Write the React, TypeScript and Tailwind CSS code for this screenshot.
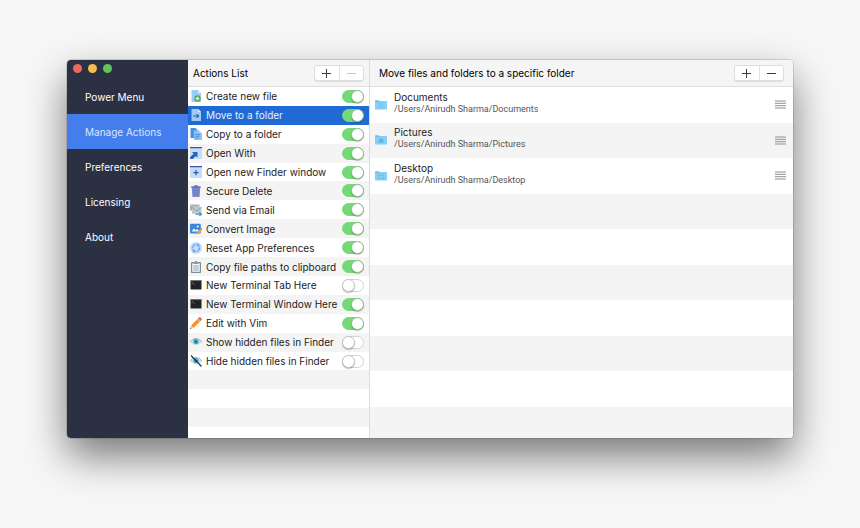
import React, { useState } from "react";
import clsx from "clsx";

function FileShape({ x = 1.5 }: { x?: number }) {
  return (
    <>
      <path d={`M${x} 0h6.5l3 3v9h-9.5z`} fill="#9ccbf8" />
      <path d={`M${x + 6.5} 0v3h3z`} fill="#dceefe" />
    </>
  );
}

function CreateIcon() {
  return (
    <>
      <FileShape />
      <circle cx="7.5" cy="8.5" r="3.2" fill="#4fa858" />
      <path d="M7.5 6.7v3.6M5.7 8.5h3.6" stroke="#e2f6de" strokeWidth="1.3" />
    </>
  );
}

function MoveIcon() {
  return (
    <>
      <FileShape />
      <path d="M3 7h5.5M6.6 5.2 8.6 7 6.6 8.8" stroke="#2763b5" strokeWidth="1.1" fill="none" />
    </>
  );
}

function CopyIcon() {
  return (
    <>
      <path d="M.5 0h5l2 2v8h-7z" fill="#4593e3" />
      <path d="M4 2.5h5.5L12 5v7H4z" fill="#8cc2f5" />
      <path d="M9.5 2.5V5H12z" fill="#dceefe" />
      <path d="M5.3 6.5h4.5M5.3 8.2h4.5M5.3 9.9h3" stroke="#3d86d6" strokeWidth=".8" />
    </>
  );
}

function OpenWithIcon() {
  return (
    <>
      <path d="M0 0h12v12H0z" fill="#c3def7" />
      <path d="M0 0h12v1.3H0z" fill="#3c4fae" />
      <path d="M2 5h5.5v5.5L5.8 8.9 2.700 12H.2V9.900L3.700 6.700z" fill="#2a62b8" />
    </>
  );
}

function NewWindowIcon() {
  return (
    <>
      <path d="M0 0h12v12H0z" fill="#c3def7" />
      <path d="M0 0h12v1.3H0z" fill="#3c4fae" />
      <path d="M6 4v5.2M3.4 6.6h5.2" stroke="#3c4fae" strokeWidth="1.2" />
    </>
  );
}

function TrashIcon() {
  return (
    <>
      <path d="M1.800 3h8.400l-.6 9H2.400z" fill="#7f89cb" />
      <path d="M1.3 1.2H4.2V.2h3.6v1h2.9V3H1.3z" fill="#6673c2" />
      <path d="M4.3 4.2v6.6M6 4.2v6.6M7.7 4.2v6.6" stroke="#6974bd" strokeWidth=".5" />
    </>
  );
}

function MailIcon() {
  return (
    <>
      <path d="M0 .5h9.5v6H0z" fill="#9dadb7" />
      <path d="M0 .5l4.7 3.4L9.5.5" stroke="#dbe2e6" strokeWidth=".8" fill="none" />
      <path d="M2 3.3h9.5v6.5H2z" fill="#bfcad1" />
      <path d="M2 3.3l4.700 3.700 4.800-3.700" stroke="#7d8d97" strokeWidth=".8" fill="none" />
      <path d="M5.500 10.200h5.700M9.300 8.400l2.200 1.800-2.200 1.700" stroke="#3b90e6" strokeWidth="1.200" fill="none" />
    </>
  );
}

function ImageIcon() {
  return (
    <>
      <rect y=".8" width="10.8" height="9.6" rx="1" fill="#3a86dd" />
      <path d="M1.5 8.600 4 5.300l1.700 2 1.300-1.500 2.300 2.800z" fill="#e6f2ff" />
      <circle cx="7.7" cy="3.6" r="1" fill="#fff" />
      <path d="M6.500 11.500l.7-2.300 3.700-4 1.300 1.300-3.600 4.300z" fill="#f2a33a" />
      <path d="M10.300 5.700l.8-.8 1 .9-.8.900z" fill="#d9534a" />
    </>
  );
}

function ResetIcon() {
  return (
    <>
      <circle cx="6" cy="6" r="6" fill="#bfdcfb" />
      <circle cx="6" cy="6" r="3.5" stroke="#5a86d8" strokeWidth="1" strokeDasharray="4.3 1.2" fill="none" />
      <path d="M7.800 1.500l1.800 1.700-2.100.4zM4.200 10.500l-1.800-1.700 2.100-.4z" fill="#5a86d8" />
    </>
  );
}

function ClipboardIcon() {
  return (
    <>
      <rect x="1" y="1" width="10" height="11" rx=".8" fill="#7d8e98" />
      <path d="M2.200 2.400h7.600v8.400H2.200z" fill="#f6f8f9" />
      <path d="M3.700 1h1.100a1.200 1.200 0 0 1 2.400 0h1.100v2H3.700z" fill="#8b9ba5" />
      <path d="M3.300 5h5.400M3.300 7h5.400M3.300 9h5.400" stroke="#8797a0" strokeWidth=".9" />
    </>
  );
}

function TerminalIcon() {
  return (
    <>
      <path d="M.5 1.500h11v9H.5z" fill="#222" />
      <path d="M.5 1.500h11v.7H.5z" fill="#555" />
      <path d="M1.700 3.200l1.300 1-1.300.9M3.600 5.300h1.400" stroke="#858585" strokeWidth=".6" fill="none" />
    </>
  );
}

function PencilIcon() {
  return (
    <>
      <path d="M1 8.500l6.800-6.800 2.500 2.500L3.500 11z" fill="#f59331" />
      <path d="M7.800 1.700l1.300-1.300c.6-.5 1.100-.4 1.500 0l1 1c.4.400.5 1 0 1.500l-1.300 1.300z" fill="#ef6a55" />
      <path d="M7.200 2.300l.8-.8 2.500 2.500-.8.800z" fill="#b8c4ca" />
      <path d="M1 8.500l2.500 2.500L0 12z" fill="#f3c99a" />
      <path d="M.5 10.500l1 1L0 12z" fill="#3d4a55" />
    </>
  );
}

function EyeIcon() {
  return (
    <>
      <path d="M0 6c2.800-4.600 9.200-4.600 12 0-2.800 4.200-9.200 4.200-12 0z" fill="#d5e0e5" />
      <path d="M0 6c2.800-4.600 9.200-4.600 12 0" stroke="#93a9b3" strokeWidth=".8" fill="none" />
      <circle cx="6" cy="5.6" r="2.7" fill="#35a9c6" />
      <circle cx="6" cy="5.6" r="1" fill="#1b4350" />
      <circle cx="7" cy="4.700" r=".5" fill="#d8f3fa" />
    </>
  );
}

function EyeOffIcon() {
  return (
    <>
      <EyeIcon />
      <path d="M1 .5l10.500 11" stroke="#1d3038" strokeWidth="1.1" />
    </>
  );
}

const initialActions = [
  { name: "Create new file", icon: CreateIcon, on: true },
  { name: "Move to a folder", icon: MoveIcon, on: true },
  { name: "Copy to a folder", icon: CopyIcon, on: true },
  { name: "Open With", icon: OpenWithIcon, on: true },
  { name: "Open new Finder window", icon: NewWindowIcon, on: true },
  { name: "Secure Delete", icon: TrashIcon, on: true },
  { name: "Send via Email", icon: MailIcon, on: true },
  { name: "Convert Image", icon: ImageIcon, on: true },
  { name: "Reset App Preferences", icon: ResetIcon, on: true },
  { name: "Copy file paths to clipboard", icon: ClipboardIcon, on: true },
  { name: "New Terminal Tab Here", icon: TerminalIcon, on: false },
  { name: "New Terminal Window Here", icon: TerminalIcon, on: true },
  { name: "Edit with Vim", icon: PencilIcon, on: true },
  { name: "Show hidden files in Finder", icon: EyeIcon, on: false },
  { name: "Hide hidden files in Finder", icon: EyeOffIcon, on: false },
];

const folders = [
  { name: "Documents", path: "/Users/Anirudh Sharma/Documents" },
  { name: "Pictures", path: "/Users/Anirudh Sharma/Pictures" },
  { name: "Desktop", path: "/Users/Anirudh Sharma/Desktop" },
];

const navItems = ["Power Menu", "Manage Actions", "Preferences", "Licensing", "About"];

function FolderIcon({ kind }: { kind: string }) {
  return (
    <svg viewBox="0 0 12 10" className="h-[10px] w-3 shrink-0" aria-hidden="true">
      <path d="M0 .9Q0 .3.600.3h3.200l1 1h6.600q.6 0 .6.600V9H0z" fill="#6cc0ec" />
      <path d="M0 2.300h12v6.600q0 .6-.6.600H.6Q0 9.500 0 8.900z" fill="#86d0f7" />
      {kind === "Documents" && <path d="M4.700 3.800h1.800l1 1v2.900H4.700z" fill="none" stroke="#6dbde6" strokeWidth=".6" />}
      {kind === "Pictures" && <path d="M3.500 4.200h1l.5-.6h2l.5.600h1v3.500h-5z" fill="#63b6e1" />}
      {kind === "Desktop" && <path d="M3.300 4h5.400v3.600H3.300z" fill="none" stroke="#63b6e1" strokeWidth=".7" />}
    </svg>
  );
}

function AddRemove({ removeDisabled = false }: { removeDisabled?: boolean }) {
  return (
    <div className="flex h-4 w-[50px] divide-x divide-[#e2e2e2] rounded-[3px] border border-[#dedede] bg-white shadow-[0_1px_0_#dedede]">
      <button type="button" aria-label="Add" className="flex flex-1 items-center justify-center">
        <svg viewBox="0 0 9 9" className="size-[9px]" aria-hidden="true">
          <path d="M4.500 0v9M0 4.500h9" stroke="#3c3c3c" />
        </svg>
      </button>
      <button type="button" aria-label="Remove" disabled={removeDisabled} className="flex flex-1 items-center justify-center">
        <svg viewBox="0 0 9 9" className="size-[9px]" aria-hidden="true">
          <path d="M0 4.500h9" stroke={removeDisabled ? "#c4c4c4" : "#3c3c3c"} />
        </svg>
      </button>
    </div>
  );
}

export default function App() {
  const [actions, setActions] = useState(initialActions);
  const toggle = (index: number) =>
    setActions(actions.map((a, i) => (i === index ? { ...a, on: !a.on } : a)));

  return (
    <div className="flex h-screen bg-[#f7f7f7] px-[67px] pt-[60px] pb-[90px] font-[Inter,'Liberation_Sans',sans-serif] text-[10px] leading-3 text-[#222]">
      <main className="flex min-w-0 flex-1 overflow-hidden rounded-[4px] bg-white shadow-[0_0_0_1px_rgba(0,0,0,0.12),0_18px_40px_rgba(0,0,0,0.52)]">
        <aside className="w-[121px] shrink-0 bg-[#2c3043]">
          <div className="flex h-[19px] gap-[6px] pt-1 pl-[6px]">
            <button type="button" aria-label="Close" className="size-[9px] rounded-full bg-[#ee6a5f]" />
            <button type="button" aria-label="Minimize" className="size-[9px] rounded-full bg-[#f5bd4f]" />
            <button type="button" aria-label="Zoom" className="size-[9px] rounded-full bg-[#61c454]" />
          </div>
          <nav aria-label="Settings">
            {navItems.map((item) => (
              <a
                key={item}
                href="#"
                className={clsx(
                  "flex h-[35px] items-center pl-[18px]",
                  item === "Manage Actions" ? "bg-[#447eec] text-[#dbe7fc]" : "text-white",
                )}
              >
                {item}
              </a>
            ))}
          </nav>
        </aside>

        <section className="flex w-[181px] shrink-0 flex-col">
          <header className="flex h-[27px] shrink-0 items-center justify-between border-b border-[#dedede] bg-[#f5f5f5] px-[5px]">
            <h2 className="text-black">Actions List</h2>
            <AddRemove removeDisabled />
          </header>
          <div className="min-h-0 flex-1 overflow-hidden">
            <ul className="grid h-[378px] auto-rows-fr">
              {actions.map(({ name, icon: Icon, on }, i) => (
                <li key={name} className={i === 1 ? "bg-[#216ad5] text-[#e8f0fb]" : "odd:bg-white even:bg-[#f4f4f4]"}>
                  <label className="flex h-full items-center gap-1 pr-[5px] pl-[2px]">
                    <svg viewBox="0 0 12 12" className="size-3 shrink-0" aria-hidden="true">
                      <Icon />
                    </svg>
                    <span className="flex-1 whitespace-nowrap">{name}</span>
                    <input
                      type="checkbox"
                      checked={on}
                      onChange={() => toggle(i)}
                      className="flex h-[13px] w-[22px] shrink-0 appearance-none rounded-full border border-[#d2d2d2] bg-white before:-m-px before:size-[13px] before:rounded-full before:border before:border-[#c4c4c4] before:bg-white before:shadow-[0_1px_1px_rgba(0,0,0,0.25)] checked:justify-end checked:border-[#76d977] checked:bg-[#76d977] checked:before:border-[#8fbf90]"
                    />
                  </label>
                </li>
              ))}
              {[0, 1, 2, 3, 4].map((n) => (
                <li key={n} aria-hidden="true" className="odd:bg-white even:bg-[#f4f4f4]" />
              ))}
            </ul>
          </div>
        </section>

        <section className="flex min-w-0 flex-1 flex-col border-l border-[#dcdcdc]">
          <header className="flex h-[27px] shrink-0 items-center justify-between border-b border-[#dedede] bg-[#f5f5f5] px-[9px]">
            <h2 className="text-black">Move files and folders to a specific folder</h2>
            <AddRemove />
          </header>
          <div className="min-h-0 flex-1 overflow-hidden">
            <ul className="grid h-[355px] auto-rows-fr">
              {folders.map(({ name, path }) => (
                <li key={name} className="flex items-center gap-[7px] px-[5px] odd:bg-white even:bg-[#f4f4f4]">
                  <FolderIcon kind={name} />
                  <div className="min-w-0 flex-1 pb-1">
                    <p>{name}</p>
                    <p className="font-[Roboto,'Liberation_Sans',sans-serif] text-[9px] text-[#555]">{path}</p>
                  </div>
                  <button type="button" aria-label={`Reorder ${name}`} className="shrink-0 px-[2px]">
                    <svg viewBox="0 0 11 9" className="h-[9px] w-[11px]" aria-hidden="true">
                      <path d="M0 1h11M0 3.300h11M0 5.700h11M0 8h11" stroke="#909090" />
                    </svg>
                  </button>
                </li>
              ))}
              {[0, 1, 2, 3, 4, 5, 6].map((n) => (
                <li key={n} aria-hidden="true" className="odd:bg-white even:bg-[#f4f4f4]" />
              ))}
            </ul>
          </div>
        </section>
      </main>
    </div>
  );
}
